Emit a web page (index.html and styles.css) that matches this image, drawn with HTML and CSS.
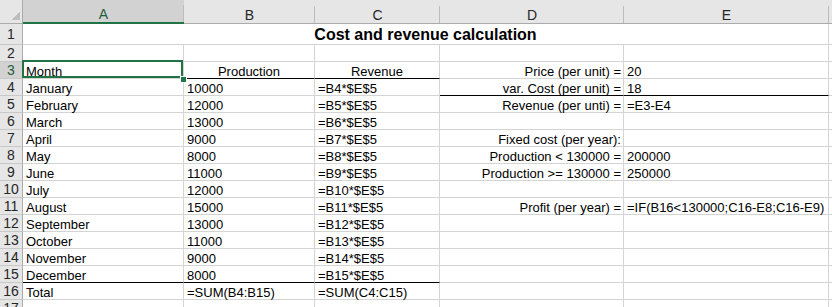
FILE: index.html
```html
<!DOCTYPE html>
<html>
<head>
<meta charset="utf-8">
<link rel="stylesheet" href="styles.css">
</head>
<body>
<div class="sheet">
  <div class="corner"></div><div class="ch sel">A</div><div class="ch">B</div><div class="ch">C</div><div class="ch">D</div><div class="ch">E</div><div class="ch x"></div>

  <div class="rh">1</div><div class="c title">Cost and revenue calculation</div><div class="c x"></div>

  <div class="rh">2</div><div class="c"></div><div class="c"></div><div class="c"></div><div class="c"></div><div class="c"></div><div class="c x"></div>

  <div class="rh sel">3</div><div class="c sel-cell">Month</div><div class="c m bb">Production</div><div class="c m bb">Revenue</div><div class="c r">Price (per unit) =</div><div class="c">20</div><div class="c x"></div>

  <div class="rh">4</div><div class="c">January</div><div class="c">10000</div><div class="c">=B4*$E$5</div><div class="c r bb">var. Cost (per unit) =</div><div class="c bb">18</div><div class="c x"></div>

  <div class="rh">5</div><div class="c">February</div><div class="c">12000</div><div class="c">=B5*$E$5</div><div class="c r">Revenue (per unti) =</div><div class="c">=E3-E4</div><div class="c x"></div>

  <div class="rh">6</div><div class="c">March</div><div class="c">13000</div><div class="c">=B6*$E$5</div><div class="c"></div><div class="c"></div><div class="c x"></div>

  <div class="rh">7</div><div class="c">April</div><div class="c">9000</div><div class="c">=B7*$E$5</div><div class="c r">Fixed cost (per year):</div><div class="c"></div><div class="c x"></div>

  <div class="rh">8</div><div class="c">May</div><div class="c">8000</div><div class="c">=B8*$E$5</div><div class="c r">Production &lt; 130000 =</div><div class="c">200000</div><div class="c x"></div>

  <div class="rh">9</div><div class="c">June</div><div class="c">11000</div><div class="c">=B9*$E$5</div><div class="c r">Production &gt;= 130000 =</div><div class="c">250000</div><div class="c x"></div>

  <div class="rh">10</div><div class="c">July</div><div class="c">12000</div><div class="c">=B10*$E$5</div><div class="c"></div><div class="c"></div><div class="c x"></div>

  <div class="rh">11</div><div class="c">August</div><div class="c">15000</div><div class="c">=B11*$E$5</div><div class="c r">Profit (per year) =</div><div class="c">=IF(B16&lt;130000;C16-E8;C16-E9)</div><div class="c x"></div>

  <div class="rh">12</div><div class="c">September</div><div class="c">13000</div><div class="c">=B12*$E$5</div><div class="c"></div><div class="c"></div><div class="c x"></div>

  <div class="rh">13</div><div class="c">October</div><div class="c">11000</div><div class="c">=B13*$E$5</div><div class="c"></div><div class="c"></div><div class="c x"></div>

  <div class="rh">14</div><div class="c">November</div><div class="c">9000</div><div class="c">=B14*$E$5</div><div class="c"></div><div class="c"></div><div class="c x"></div>

  <div class="rh">15</div><div class="c bb">December</div><div class="c bb">8000</div><div class="c bb">=B15*$E$5</div><div class="c"></div><div class="c"></div><div class="c x"></div>

  <div class="rh">16</div><div class="c">Total</div><div class="c">=SUM(B4:B15)</div><div class="c">=SUM(C4:C15)</div><div class="c"></div><div class="c"></div><div class="c x"></div>

  <div class="rh">17</div><div class="c"></div><div class="c"></div><div class="c"></div><div class="c"></div><div class="c"></div><div class="c x"></div>
</div>
</body>
</html>
```

FILE: styles.css
```css
* { box-sizing: border-box; }

body {
  margin: 0;
  background: #fff;
  font-family: "Liberation Sans", Arial, sans-serif;
}

.sheet {
  display: grid;
  grid-template-columns: 23px 161px 131px 125px 184px 205px 1fr;
  grid-template-rows: 24px 21px repeat(15, 17px) 1fr;
  width: 832px;
  height: 307px;
  overflow: hidden;
}

.corner {
  background: linear-gradient(135deg, transparent 50%, #bdbdbd 50%) 11px 11px / 9px 9px no-repeat, #e6e6e6;
  border-right: 1px solid #ababab;
  border-bottom: 1px solid #ababab;
}

.ch {
  background: linear-gradient(#bcbcbc, #bcbcbc) right bottom / 1px 17px no-repeat, #e6e6e6;
  border-bottom: 1px solid #ababab;
  display: flex;
  align-items: center;
  justify-content: center;
  padding-top: 6px;
  font-size: 14px;
  color: #262626;
}

.ch.sel {
  background: linear-gradient(#bcbcbc, #bcbcbc) right bottom / 1px 17px no-repeat, #d2d2d2;
  border-bottom: 2px solid #217346;
  color: #1e5e3a;
}

.ch.x {
  background: #e6e6e6;
}

.rh {
  background: #e6e6e6;
  border-right: 1px solid #ababab;
  border-bottom: 1px solid #c8c8c8;
  display: flex;
  align-items: center;
  justify-content: center;
  font-size: 14px;
  color: #262626;
}

.rh.sel {
  background: #d2d2d2;
  color: #1e5e3a;
}

.c {
  border-right: 1px solid #d4d4d4;
  border-bottom: 1px solid #d4d4d4;
  display: flex;
  align-items: flex-end;
  padding: 0 3px;
  font-size: 13px;
  line-height: 13px;
  white-space: nowrap;
  color: #000;
}

.c.x {
  border-right: none;
}

.r {
  justify-content: flex-end;
  padding-right: 2px;
}

.m {
  justify-content: center;
}

.bb {
  border-bottom-color: #000;
}

.title {
  grid-column: span 5;
  justify-content: center;
  font-weight: bold;
  font-size: 16px;
  line-height: 18px;
}

.sel-cell {
  position: relative;
}

.sel-cell::after {
  content: "";
  position: absolute;
  left: -1px;
  top: -2px;
  right: 0;
  bottom: 0;
  border: 2px solid #217346;
}

.sel-cell::before {
  content: "";
  position: absolute;
  right: -3px;
  bottom: -4px;
  width: 5px;
  height: 5px;
  background: #217346;
  box-shadow: 0 0 0 1px #fff;
  z-index: 2;
}
```
